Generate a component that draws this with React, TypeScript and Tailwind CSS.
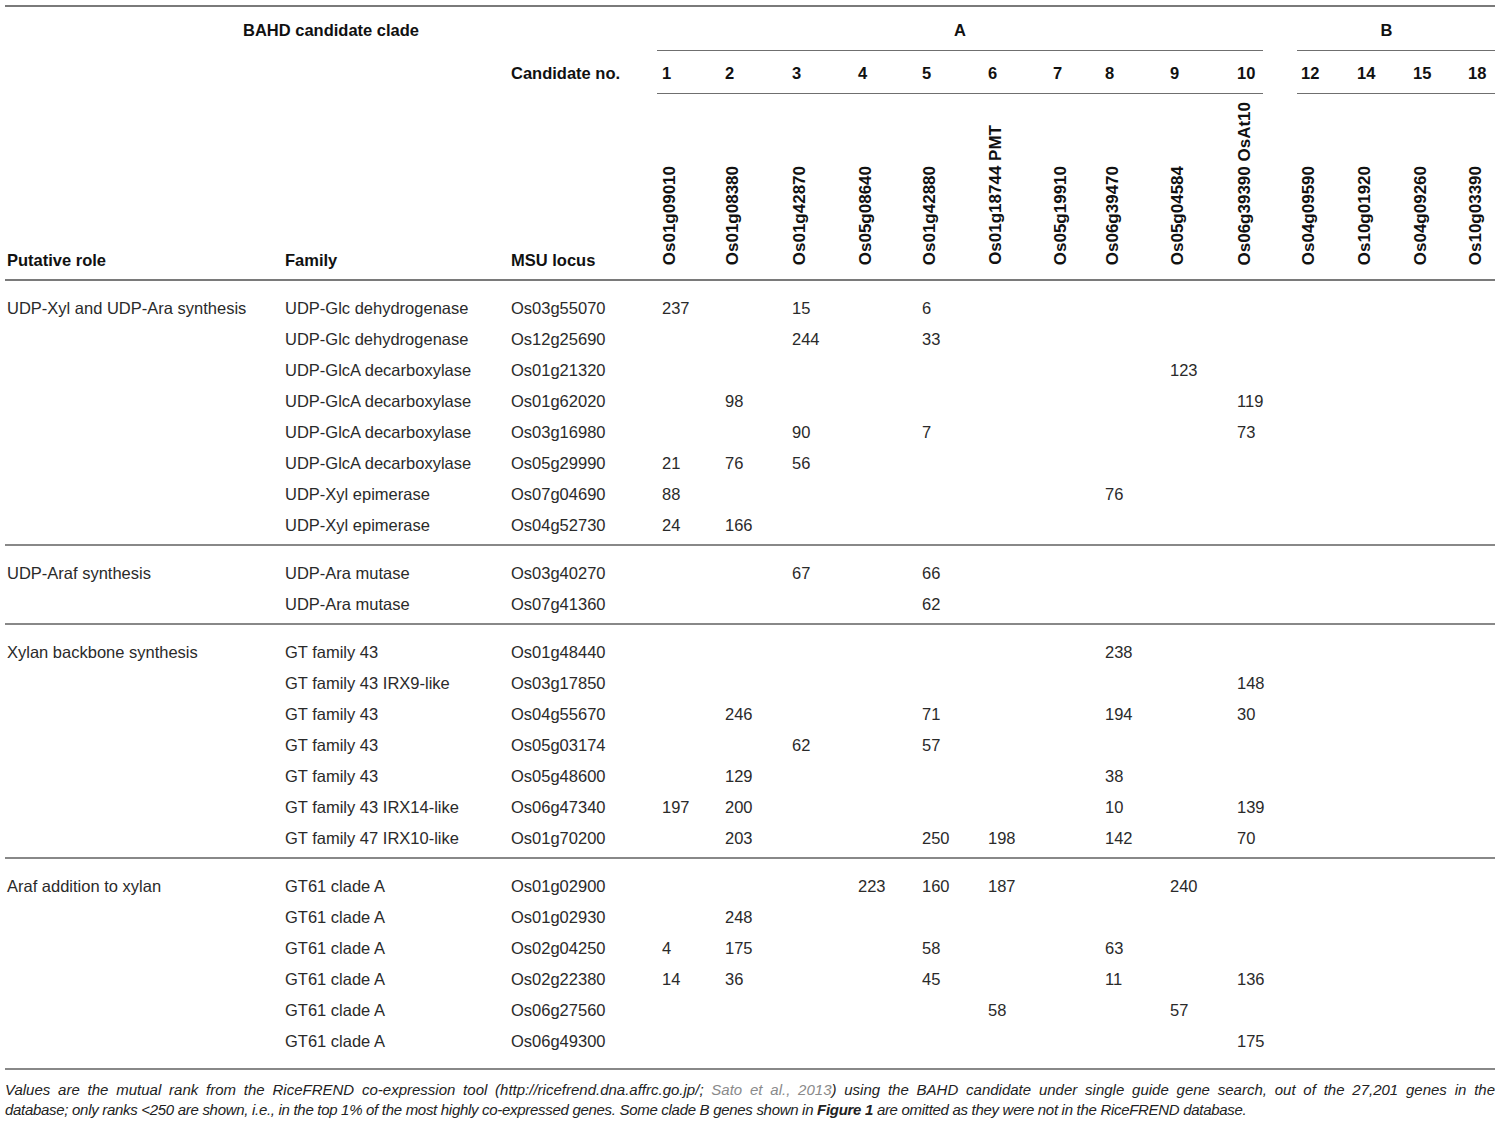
import React from "react";

const COLS =
    "grid grid-cols-[275px_226px_151px_63px_67px_66px_64px_66px_65px_52px_65px_67px_64px_56px_56px_55px_32px]";

const numbers = ["1", "2", "3", "4", "5", "6", "7", "8", "9", "10", "12", "14", "15", "18"];

const genes = [
    "Os01g09010",
    "Os01g08380",
    "Os01g42870",
    "Os05g08640",
    "Os01g42880",
    "Os01g18744 PMT",
    "Os05g19910",
    "Os06g39470",
    "Os05g04584",
    "Os06g39390 OsAt10",
    "Os04g09590",
    "Os10g01920",
    "Os04g09260",
    "Os10g03390",
];

type Row = { family: string; locus: string; v: Record<number, string> };
type Group = { role: string; rows: Row[] };

const groups: Group[] = [
    {
        role: "UDP-Xyl and UDP-Ara synthesis",
        rows: [
            { family: "UDP-Glc dehydrogenase", locus: "Os03g55070", v: { 0: "237", 2: "15", 4: "6" } },
            { family: "UDP-Glc dehydrogenase", locus: "Os12g25690", v: { 2: "244", 4: "33" } },
            { family: "UDP-GlcA decarboxylase", locus: "Os01g21320", v: { 8: "123" } },
            { family: "UDP-GlcA decarboxylase", locus: "Os01g62020", v: { 1: "98", 9: "119" } },
            { family: "UDP-GlcA decarboxylase", locus: "Os03g16980", v: { 2: "90", 4: "7", 9: "73" } },
            { family: "UDP-GlcA decarboxylase", locus: "Os05g29990", v: { 0: "21", 1: "76", 2: "56" } },
            { family: "UDP-Xyl epimerase", locus: "Os07g04690", v: { 0: "88", 7: "76" } },
            { family: "UDP-Xyl epimerase", locus: "Os04g52730", v: { 0: "24", 1: "166" } },
        ],
    },
    {
        role: "UDP-Araf synthesis",
        rows: [
            { family: "UDP-Ara mutase", locus: "Os03g40270", v: { 2: "67", 4: "66" } },
            { family: "UDP-Ara mutase", locus: "Os07g41360", v: { 4: "62" } },
        ],
    },
    {
        role: "Xylan backbone synthesis",
        rows: [
            { family: "GT family 43", locus: "Os01g48440", v: { 7: "238" } },
            { family: "GT family 43 IRX9-like", locus: "Os03g17850", v: { 9: "148" } },
            { family: "GT family 43", locus: "Os04g55670", v: { 1: "246", 4: "71", 7: "194", 9: "30" } },
            { family: "GT family 43", locus: "Os05g03174", v: { 2: "62", 4: "57" } },
            { family: "GT family 43", locus: "Os05g48600", v: { 1: "129", 7: "38" } },
            { family: "GT family 43 IRX14-like", locus: "Os06g47340", v: { 0: "197", 1: "200", 7: "10", 9: "139" } },
            { family: "GT family 47 IRX10-like", locus: "Os01g70200", v: { 1: "203", 4: "250", 5: "198", 7: "142", 9: "70" } },
        ],
    },
    {
        role: "Araf addition to xylan",
        rows: [
            { family: "GT61 clade A", locus: "Os01g02900", v: { 3: "223", 4: "160", 5: "187", 8: "240" } },
            { family: "GT61 clade A", locus: "Os01g02930", v: { 1: "248" } },
            { family: "GT61 clade A", locus: "Os02g04250", v: { 0: "4", 1: "175", 4: "58", 7: "63" } },
            { family: "GT61 clade A", locus: "Os02g22380", v: { 0: "14", 1: "36", 4: "45", 7: "11", 9: "136" } },
            { family: "GT61 clade A", locus: "Os06g27560", v: { 5: "58", 8: "57" } },
            { family: "GT61 clade A", locus: "Os06g49300", v: { 9: "175" } },
        ],
    },
];

function TableHeader() {
    return (
        <div className="border-t-2 border-b-2 border-[#7a7a7a] font-bold text-[16.5px] text-[#111]">
            {/* clade row */}
            <div className={`${COLS} h-[43px] items-center pt-[3px]`}>
                <div className="col-span-3 text-center">BAHD candidate clade</div>
                <div className="col-span-10 pr-[33px] text-center">A</div>
                <div className="col-span-4 pr-[18px] text-center">B</div>
            </div>
            <div className={`${COLS} h-px`}>
                <div className="col-start-4 col-span-10 mr-[33px] bg-[#6f6f6f]" />
                <div className="col-span-4 ml-px bg-[#6f6f6f]" />
            </div>
            {/* candidate numbers */}
            <div className={`${COLS} h-[42px] items-center pt-[2px]`}>
                <div className="col-start-3 pl-[5px]">Candidate no.</div>
                {numbers.map((n) => (
                    <div key={n} className="pl-[5px]">
                        {n}
                    </div>
                ))}
            </div>
            <div className={`${COLS} h-px`}>
                <div className="col-start-4 col-span-10 mr-[33px] bg-[#6f6f6f]" />
                <div className="col-span-4 ml-px bg-[#6f6f6f]" />
            </div>
            {/* locus names */}
            <div className={`${COLS} h-[185px] items-end`}>
                <div className="pl-[2px] pb-[9px] leading-5">Putative role</div>
                <div className="pl-[5px] pb-[9px] leading-5">Family</div>
                <div className="pl-[5px] pb-[9px] leading-5">MSU locus</div>
                {genes.map((g) => (
                    <div key={g} className="pl-[4px] pb-[14px]">
                        <div className="[writing-mode:vertical-rl] rotate-180 whitespace-nowrap text-[17px] leading-[18px]">
                            {g}
                        </div>
                    </div>
                ))}
            </div>
        </div>
    );
}

function GroupRows({ group, last }: { group: Group; last: boolean }) {
    return (
        <div className={`border-b-2 border-[#888] pt-[12px] ${last ? "pb-[11px]" : "pb-[3px]"}`}>
            {group.rows.map((r, i) => (
                <div key={r.locus} className={`${COLS} h-[31px] items-center`}>
                    <div className="pl-[2px] whitespace-nowrap">{i === 0 ? group.role : ""}</div>
                    <div className="pl-[5px] whitespace-nowrap">{r.family}</div>
                    <div className="pl-[5px]">{r.locus}</div>
                    {numbers.map((n, c) => (
                        <div key={n} className="pl-[5px]">
                            {r.v[c] ?? ""}
                        </div>
                    ))}
                </div>
            ))}
        </div>
    );
}

export default function App() {
    return (
        <div className="min-h-screen bg-white px-[5px] pt-[5px] font-['Liberation_Sans',Arial,sans-serif]">
            <div className="w-[1490px]">
                <TableHeader />
                <div className="text-[16.5px] text-[#2a2a2a]">
                    {groups.map((g, i) => (
                        <GroupRows key={g.role} group={g} last={i === groups.length - 1} />
                    ))}
                </div>
                <div className="pt-[10px] text-[15px] leading-5 italic text-[#222]">
                    <div className="text-justify [text-align-last:justify]">
                        Values are the mutual rank from the RiceFREND co-expression tool
                        (http://ricefrend.dna.affrc.go.jp/; <span className="text-[#8a8a8a]">Sato et al., 2013</span>)
                        using the BAHD candidate under single guide gene search, out of the 27,201 genes in the
                    </div>
                    <div className="tracking-[-0.3px]">
                        database; only ranks &lt;250 are shown, i.e., in the top 1% of the most highly co-expressed genes.
                        Some clade B genes shown in <span className="font-bold">Figure 1</span> are omitted as they were
                        not in the RiceFREND database.
                    </div>
                </div>
            </div>
        </div>
    );
}
